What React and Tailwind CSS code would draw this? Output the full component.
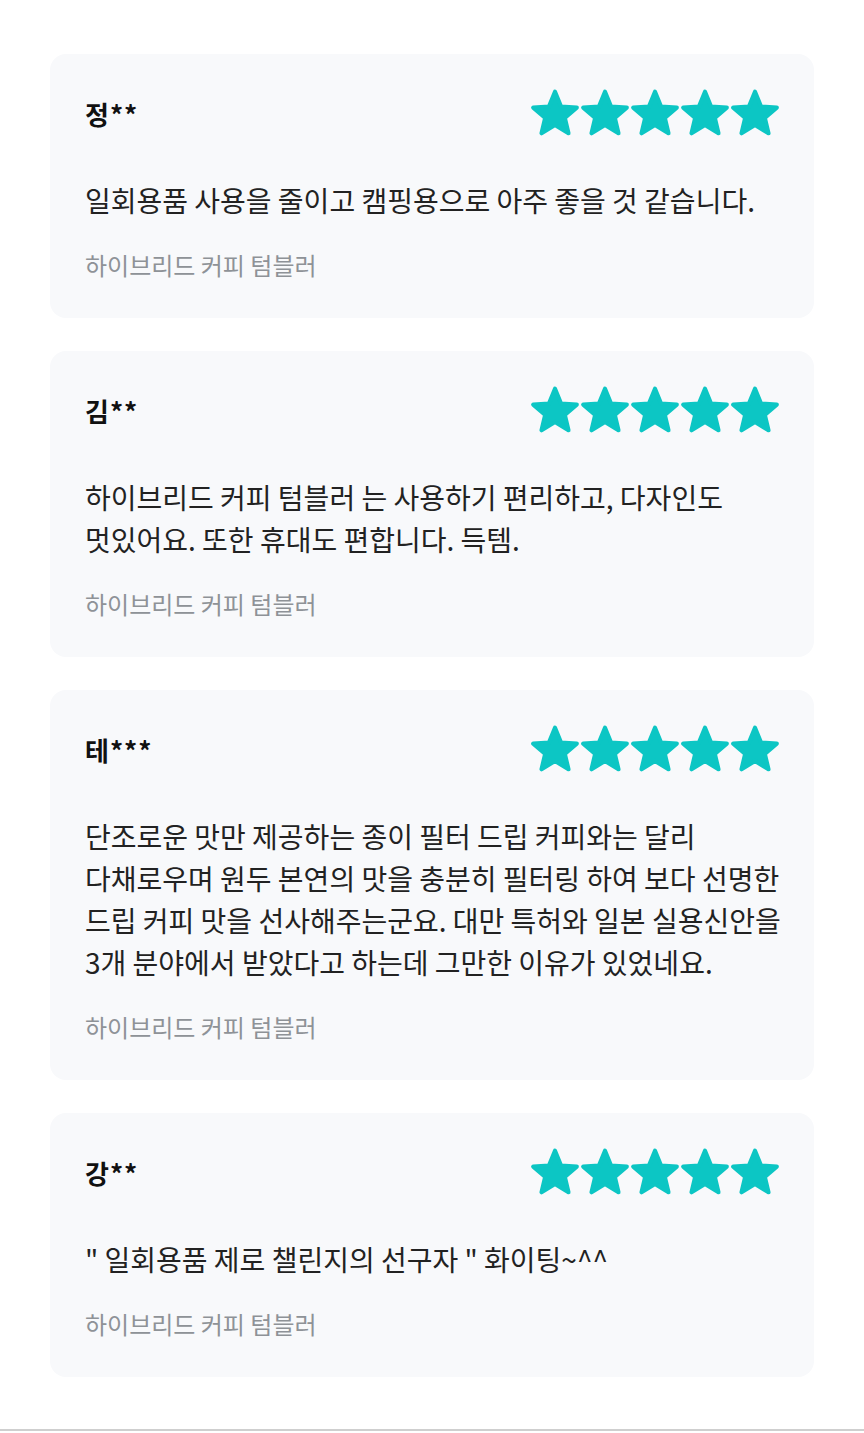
import React from "react";

const reviews = [
  {
    name: "정**",
    lines: ["일회용품 사용을 줄이고 캠핑용으로 아주 좋을 것 같습니다."],
  },
  {
    name: "김**",
    lines: ["하이브리드 커피 텀블러 는 사용하기 편리하고, 다자인도", "멋있어요. 또한 휴대도 편합니다. 득템."],
  },
  {
    name: "테***",
    lines: [
      "단조로운 맛만 제공하는 종이 필터 드립 커피와는 달리",
      "다채로우며 원두 본연의 맛을 충분히 필터링 하여 보다 선명한",
      "드립 커피 맛을 선사해주는군요. 대만 특허와 일본 실용신안을",
      "3개 분야에서 받았다고 하는데 그만한 이유가 있었네요.",
    ],
  },
  {
    name: "강**",
    lines: ["\" 일회용품 제로 챌린지의 선구자 \" 화이팅~^^"],
  },
];

const Star = () => (
  <svg width="50" height="50" viewBox="0 0 24 24" className="block">
    <polygon
      points="12,1.8 14.9,8.9 22.46,9.4 16.7,14.3 18.47,21.7 12,17.7 5.53,21.7 7.3,14.3 1.54,9.4 9.1,8.9"
      fill="#0cc6c4"
      stroke="#0cc6c4"
      strokeWidth="2"
      strokeLinejoin="round"
    />
  </svg>
);

const ReviewCard = ({ review }) => (
  <div className="bg-[#f8f9fb] rounded-2xl pl-[35px] pr-[34px] pt-[34px] pb-[37px]">
    <div className="flex items-center justify-between h-[50px]">
      <span className="text-[26px] font-bold tracking-[1px] text-[#111]">{review.name}</span>
      <div className="flex">
        {[0, 1, 2, 3, 4].map((i) => (
          <Star key={i} />
        ))}
      </div>
    </div>
    <div className="mt-[41px] text-[28px] leading-[42px] text-[#222]">
      {review.lines.map((line, i) => (
        <p key={i} className="whitespace-nowrap">{line}</p>
      ))}
    </div>
    <p className="mt-[28px] text-[24px] leading-[32px] text-[#8e9297]">하이브리드 커피 텀블러</p>
  </div>
);

const App = () => {
  return (
    <div className="bg-white min-h-[1433px] flex flex-col" style={{ fontFamily: '"Noto Sans CJK KR", "Noto Sans", sans-serif' }}>
      <div className="flex flex-col gap-[33px] px-[50px] pt-[54px] pb-[52px]">
        {reviews.map((r, i) => (
          <ReviewCard key={i} review={r} />
        ))}
      </div>
      <div className="h-[2px] bg-[#cfcfcf]" />
    </div>
  );
};

export default App;
